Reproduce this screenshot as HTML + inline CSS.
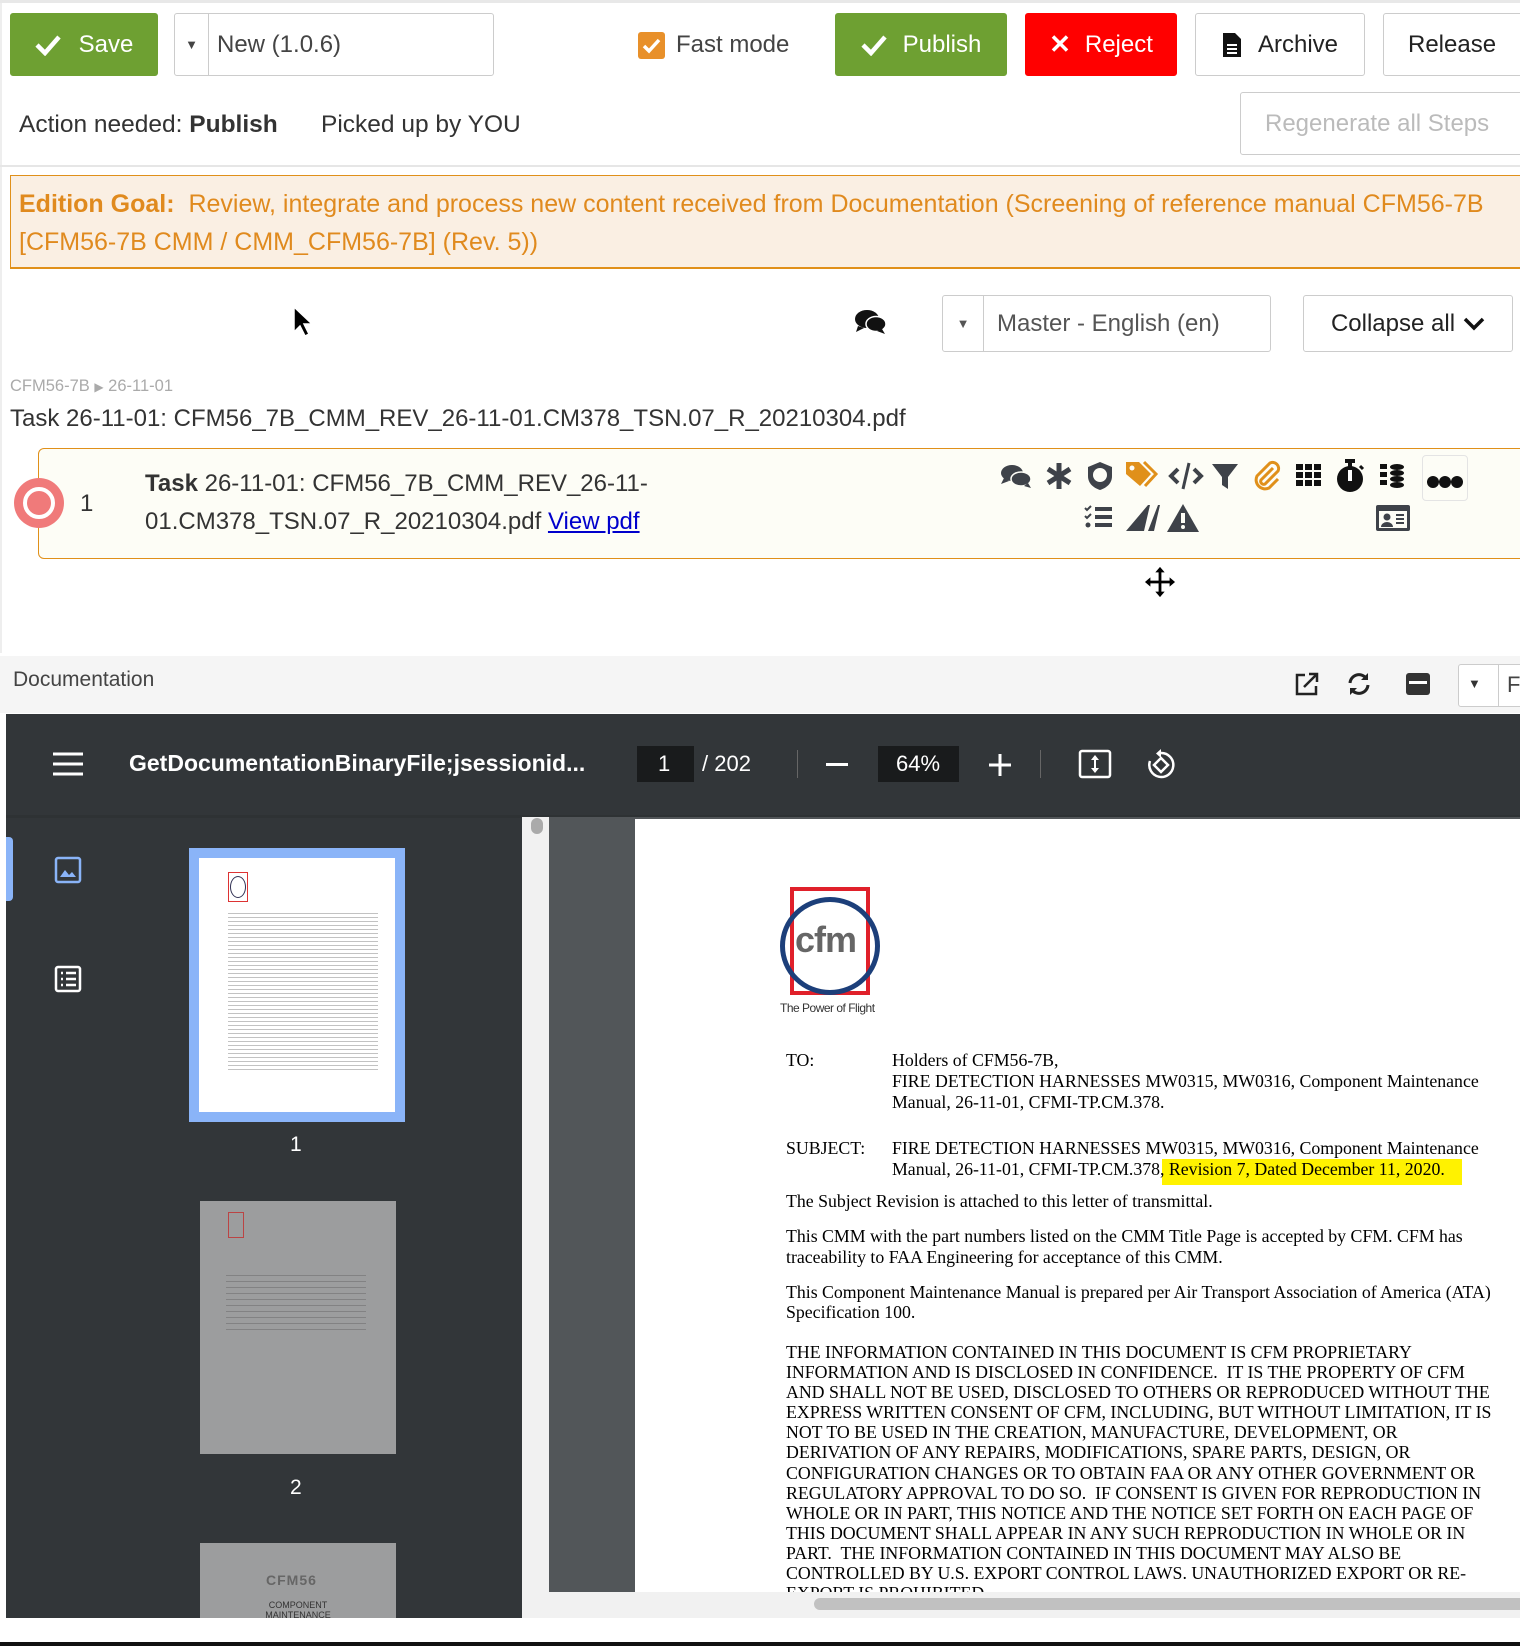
<!DOCTYPE html>
<html><head><meta charset="utf-8"><style>
*{box-sizing:border-box;margin:0;padding:0}
body{width:1520px;height:1646px;position:relative;overflow:hidden;background:#fff;font-family:"Liberation Sans",sans-serif;color:#333}
.a{position:absolute}
.btn{position:absolute;border:1px solid #ccc;border-radius:3px;background:#fff;font-size:24px;display:flex;align-items:center;justify-content:center;color:#222}
.g{background:#6ea032;border-color:#6ea032;color:#fff}
.ico{position:absolute;width:32px;height:32px}
.pl{position:absolute;left:0;white-space:nowrap;font-family:"Liberation Serif",serif;font-size:17.8px;color:#000}
.tt{color:#fff;font-size:23px}
</style></head><body>
<div class="a" style="left:0;top:0;width:1520px;height:3px;background:#e8e8e8"></div>
<div class="a" style="left:0;top:3px;width:2px;height:650px;background:#eee"></div>

<div class="btn g" style="left:10px;top:13px;width:148px;height:63px"><svg width="26" height="22" viewBox="0 0 26 22" style="margin-right:18px"><path d="M2 11l8 8L24 3" stroke="#fff" stroke-width="4.5" fill="none"/></svg>Save</div>
<div class="btn" style="left:174px;top:13px;width:320px;height:63px;justify-content:flex-start;color:#444"><div style="width:34px;height:100%;border-right:1px solid #ccc;display:flex;align-items:center;justify-content:center;font-size:13px">▼</div><span style="margin-left:8px">New (1.0.6)</span></div>
<div class="a" style="left:638px;top:32px;width:27px;height:27px;background:#e8902a;border-radius:3px"><svg width="27" height="27"><path d="M6 14l5 5 10-11" stroke="#fff" stroke-width="3.5" fill="none"/></svg></div>
<div class="a" style="left:676px;top:31px;font-size:24px;color:#444">Fast mode</div>
<div class="btn g" style="left:835px;top:13px;width:172px;height:63px"><svg width="26" height="22" viewBox="0 0 26 22" style="margin-right:16px"><path d="M2 11l8 8L24 3" stroke="#fff" stroke-width="4.5" fill="none"/></svg>Publish</div>
<div class="btn" style="left:1025px;top:13px;width:152px;height:63px;background:#f00;border-color:#f00;color:#fff"><span style="font-size:26px;font-weight:bold;margin-right:14px">✕</span>Reject</div>
<div class="btn" style="left:1195px;top:13px;width:170px;height:63px"><svg width="20" height="26" viewBox="0 0 20 26" style="margin-right:16px"><path d="M1 1h12l6 6v18H1z" fill="#111"/><path d="M5 13h10M5 17h10M5 21h10" stroke="#fff" stroke-width="2"/></svg>Archive</div>
<div class="btn" style="left:1383px;top:13px;width:150px;height:63px;justify-content:flex-start;padding-left:24px">Release</div>

<div class="a" style="left:19px;top:111px;font-size:24.5px;color:#333">Action needed: <b>Publish</b></div>
<div class="a" style="left:321px;top:111px;font-size:24.5px;color:#333">Picked up by YOU</div>
<div class="btn" style="left:1240px;top:92px;width:300px;height:63px;justify-content:flex-start;padding-left:24px;color:#bbb">Regenerate all Steps</div>
<div class="a" style="left:0;top:165px;width:1520px;height:2px;background:#e6e6e6"></div>

<div class="a" style="left:10px;top:175px;width:1530px;height:94px;background:#faefe3;border:1px solid #e0901a;border-bottom-width:2px"></div>
<div class="a" style="left:19px;top:186px;width:1500px;font-size:25px;line-height:37.5px;color:#e08a1e;white-space:nowrap"><b>Edition Goal:</b>&nbsp; Review, integrate and process new content received from Documentation (Screening of reference manual CFM56-7B<br>[CFM56-7B CMM / CMM_CFM56-7B] (Rev. 5))</div>

<svg class="a" style="left:292px;top:305px" width="22" height="34"><path d="M2 2v25l6-6 5 10 4-2-5-10h8z" fill="#000" stroke="#fff" stroke-width="1.5"/></svg>
<svg class="a" style="left:854px;top:308px" width="34" height="28" viewBox="0 0 34 28"><ellipse cx="13" cy="11" rx="12" ry="9" fill="#111"/><path d="M4 18l-2 6 8-4z" fill="#111"/><ellipse cx="22" cy="16" rx="10" ry="7.5" fill="#111" stroke="#fff" stroke-width="1.5"/><path d="M28 21l3 5-8-3z" fill="#111"/></svg>
<div class="btn" style="left:942px;top:295px;width:329px;height:57px;justify-content:flex-start;color:#555"><div style="width:41px;height:100%;border-right:1px solid #ccc;display:flex;align-items:center;justify-content:center;font-size:13px">▼</div><span style="margin-left:13px">Master - English (en)</span></div>
<div class="btn" style="left:1303px;top:295px;width:210px;height:57px">Collapse all<svg width="22" height="14" style="margin-left:8px"><path d="M2 2l9 9 9-9" stroke="#111" stroke-width="3.5" fill="none"/></svg></div>

<div class="a" style="left:10px;top:377px;font-size:16.5px;color:#aaa">CFM56-7B <span style="font-size:12px">▶</span> 26-11-01</div>
<div class="a" style="left:10px;top:405px;font-size:24px;color:#333">Task 26-11-01: CFM56_7B_CMM_REV_26-11-01.CM378_TSN.07_R_20210304.pdf</div>

<div class="a" style="left:38px;top:448px;width:1500px;height:111px;background:#fdfdf6;border:1.5px solid #e0901a;border-radius:6px 0 0 6px"></div>
<div class="a" style="left:14px;top:478px;width:50px;height:50px;border-radius:50%;background:#f07a7a"></div>
<div class="a" style="left:23px;top:487px;width:32px;height:32px;border-radius:50%;border:4px solid #fff;background:#f07a7a"></div>
<div class="a" style="left:80px;top:490px;font-size:24px">1</div>
<div class="a" style="left:145px;top:465px;font-size:24px;line-height:38px;color:#333"><b>Task</b> 26-11-01: CFM56_7B_CMM_REV_26-11-<br>01.CM378_TSN.07_R_20210304.pdf <span style="color:#00c;text-decoration:underline">View pdf</span></div>

<svg class="ico" style="left:1000px;top:460px" viewBox="0 0 32 32"><ellipse cx="12" cy="13" rx="11" ry="8" fill="#3e4249"/><path d="M4 18l-3 6 8-3z" fill="#3e4249"/><ellipse cx="21" cy="19" rx="10" ry="7" fill="#3e4249" stroke="#fdfdf6" stroke-width="1.5"/><path d="M28 23l3 5-7-2z" fill="#3e4249"/></svg>
<svg class="ico" style="left:1043px;top:460px" viewBox="0 0 32 32"><path d="M16 3v26M5 9l22 14M27 9L5 23" stroke="#3e4249" stroke-width="5"/></svg>
<svg class="ico" style="left:1084px;top:460px" viewBox="0 0 32 32"><path d="M16 2l12 5v9c0 8-6 12-12 14C10 28 4 24 4 16V7z" fill="#3e4249"/><circle cx="16" cy="15" r="7" fill="#fdfdf6"/></svg>
<svg class="ico" style="left:1124px;top:458px;width:38px" viewBox="0 0 38 32"><path d="M2 4h13l12 12-11 12L2 16z" fill="#e0901a"/><circle cx="8" cy="10" r="2.5" fill="#fdfdf6"/><path d="M20 4l12 12-11 12" stroke="#e0901a" stroke-width="3" fill="none"/></svg>
<svg class="ico" style="left:1168px;top:460px;width:36px" viewBox="0 0 36 32"><path d="M10 9l-7 7 7 7M26 9l7 7-7 7" stroke="#3e4249" stroke-width="4" fill="none"/><path d="M21 3l-6 26" stroke="#3e4249" stroke-width="3"/></svg>
<svg class="ico" style="left:1209px;top:460px" viewBox="0 0 32 32"><path d="M3 4h26L19 17v12l-6-4v-8z" fill="#3e4249"/></svg>
<svg class="ico" style="left:1251px;top:460px" viewBox="0 0 32 32"><path d="M22 8L10 20a3 3 0 0 0 4 4l13-13a6 6 0 0 0-8-8L6 16a9 9 0 0 0 12 12l9-9" stroke="#e0901a" stroke-width="3" fill="none"/></svg>
<svg class="ico" style="left:1293px;top:460px" viewBox="0 0 32 32"><g fill="#111"><rect x="3" y="4" width="7" height="6"/><rect x="12" y="4" width="7" height="6"/><rect x="21" y="4" width="7" height="6"/><rect x="3" y="12" width="7" height="6"/><rect x="12" y="12" width="7" height="6"/><rect x="21" y="12" width="7" height="6"/><rect x="3" y="20" width="7" height="6"/><rect x="12" y="20" width="7" height="6"/><rect x="21" y="20" width="7" height="6"/></g></svg>
<svg class="ico" style="left:1334px;top:458px;height:36px" viewBox="0 0 32 36"><rect x="11" y="1" width="10" height="4" fill="#111"/><rect x="14" y="4" width="4" height="5" fill="#111"/><circle cx="16" cy="21" r="13" fill="#111"/><rect x="14" y="12" width="4" height="11" fill="#fff"/><path d="M26 8l3 3" stroke="#111" stroke-width="3"/></svg>
<svg class="ico" style="left:1376px;top:460px" viewBox="0 0 32 32"><g fill="#111"><rect x="4" y="4" width="7" height="5"/><rect x="4" y="12" width="7" height="5"/><rect x="4" y="20" width="7" height="5"/><ellipse cx="21" cy="7" rx="7" ry="3"/><ellipse cx="21" cy="13" rx="7" ry="3"/><ellipse cx="21" cy="19" rx="7" ry="3"/><ellipse cx="21" cy="25" rx="7" ry="3"/></g></svg>
<div class="a" style="left:1422px;top:455px;width:46px;height:46px;border:1px solid #e4e4e4;border-radius:4px;background:#fdfdf6"></div>
<svg class="a" style="left:1425px;top:474px" width="40" height="16"><circle cx="8" cy="8" r="6" fill="#111"/><circle cx="20" cy="8" r="6" fill="#111"/><circle cx="32" cy="8" r="6" fill="#111"/></svg>
<svg class="ico" style="left:1083px;top:502px" viewBox="0 0 32 32"><path d="M2 6l2 2 4-4M2 14l2 2 4-4" stroke="#3e4249" stroke-width="2" fill="none"/><circle cx="5" cy="23" r="2.5" fill="#3e4249"/><path d="M12 7h17M12 15h17M12 23h17" stroke="#3e4249" stroke-width="4"/></svg>
<svg class="ico" style="left:1124px;top:502px;width:36px" viewBox="0 0 36 32"><path d="M2 29L24 3h2L20 29zM24 29L34 3h2l-6 26z" fill="#3e4249"/></svg>
<svg class="ico" style="left:1166px;top:502px;width:34px" viewBox="0 0 34 32"><path d="M17 2L33 30H1z" fill="#3e4249"/><rect x="15" y="11" width="4" height="10" fill="#fdfdf6"/><circle cx="17" cy="25" r="2" fill="#fdfdf6"/></svg>
<svg class="ico" style="left:1375px;top:502px;width:36px" viewBox="0 0 36 32"><rect x="1" y="3" width="34" height="26" rx="2" fill="#3e4249"/><rect x="4" y="9" width="28" height="17" fill="#fdfdf6"/><circle cx="12" cy="15" r="3.5" fill="#3e4249"/><path d="M6 25a6 5 0 0 1 12 0z" fill="#3e4249"/><path d="M21 13h8M21 17h8M21 21h8" stroke="#3e4249" stroke-width="2"/></svg>

<svg class="a" style="left:1143px;top:565px" width="34" height="34" viewBox="0 0 34 34"><path d="M17 1l6 7h-4v7h7v-4l7 6-7 6v-4h-7v7h4l-6 7-6-7h4v-7H8v4l-7-6 7-6v4h7V8h-4z" fill="#000" stroke="#fff" stroke-width="1.2"/></svg>

<div class="a" style="left:0;top:656px;width:1520px;height:57px;background:#f5f5f5"></div>
<div class="a" style="left:13px;top:668px;font-size:21px;color:#444">Documentation</div>
<svg class="a" style="left:1294px;top:671px" width="26" height="26" viewBox="0 0 26 26"><path d="M11 4H3v19h19v-8" stroke="#222" stroke-width="2.5" fill="none"/><path d="M10 16L23 3M15 3h8v8" stroke="#222" stroke-width="2.5" fill="none"/></svg>
<svg class="a" style="left:1346px;top:671px" width="26" height="26" viewBox="0 0 26 26"><path d="M4 12a9 9 0 0 1 16-5M22 14a9 9 0 0 1-16 5" stroke="#222" stroke-width="3" fill="none"/><path d="M22 2v7h-7zM4 24v-7h7z" fill="#222"/></svg>
<svg class="a" style="left:1405px;top:672px" width="26" height="24"><rect x="1" y="1" width="24" height="22" rx="3" fill="#333"/><rect x="4" y="9" width="18" height="3" fill="#fff"/></svg>
<div class="a" style="left:1458px;top:664px;width:70px;height:43px;border:1px solid #ccc;border-radius:3px;background:#fff"></div>
<div class="a" style="left:1468px;top:676px;font-size:13px;color:#333">▼</div>
<div class="a" style="left:1498px;top:664px;width:1px;height:43px;background:#ccc"></div>
<div class="a" style="left:1507px;top:672px;font-size:22px;color:#444">F</div>

<div class="a" style="left:0;top:713px;width:1520px;height:2px;background:#fff"></div>
<div class="a" style="left:6px;top:714px;width:1514px;height:904px;background:#323639"></div>
<svg class="a" style="left:53px;top:752px" width="30" height="24"><path d="M0 2h30M0 12h30M0 22h30" stroke="#fff" stroke-width="3"/></svg>
<div class="a tt" style="left:129px;top:750px;font-weight:bold">GetDocumentationBinaryFile;jsessionid...</div>
<div class="a" style="left:637px;top:746px;width:57px;height:36px;background:#191b1c"></div>
<div class="a tt" style="left:658px;top:751px;font-size:22px">1</div>
<div class="a tt" style="left:702px;top:751px;font-size:22px">/ 202</div>
<div class="a" style="left:797px;top:750px;width:1px;height:28px;background:#666"></div>
<div class="a" style="left:826px;top:763px;width:22px;height:3px;background:#fff"></div>
<div class="a" style="left:878px;top:746px;width:81px;height:36px;background:#191b1c"></div>
<div class="a tt" style="left:896px;top:751px;font-size:22px">64%</div>
<svg class="a" style="left:988px;top:753px" width="24" height="24"><path d="M12 1v22M1 12h22" stroke="#fff" stroke-width="3"/></svg>
<div class="a" style="left:1040px;top:750px;width:1px;height:28px;background:#666"></div>
<svg class="a" style="left:1078px;top:749px" width="34" height="30"><rect x="2" y="2" width="30" height="26" rx="2" stroke="#fff" stroke-width="2.5" fill="none"/><path d="M17 6l-4 5h8zM17 24l-4-5h8z" fill="#fff"/><path d="M17 10v10" stroke="#fff" stroke-width="2"/></svg>
<svg class="a" style="left:1145px;top:748px" width="32" height="32"><path d="M16 5a12 12 0 1 1-11 8" stroke="#fff" stroke-width="2.5" fill="none"/><path d="M16 1v9l-5-4.5z" fill="#fff"/><path d="M9 17l7-7 7 7-7 7z" stroke="#fff" stroke-width="2.5" fill="none"/></svg>
<div class="a" style="left:6px;top:815px;width:1514px;height:3px;background:#2a2d30;opacity:.5"></div>

<div class="a" style="left:6px;top:837px;width:7px;height:64px;background:#8ab4f8;border-radius:0 4px 4px 0"></div>
<svg class="a" style="left:54px;top:856px" width="28" height="28"><rect x="2" y="2" width="24" height="24" rx="2" stroke="#8ab4f8" stroke-width="2.5" fill="none"/><path d="M6 21l5-7 4 5 3-3 4 5z" fill="#8ab4f8"/></svg>
<svg class="a" style="left:54px;top:965px" width="28" height="28"><rect x="2" y="2" width="24" height="24" rx="2" stroke="#fff" stroke-width="2.5" fill="none"/><path d="M7 8h2M12 8h10M7 14h2M12 14h10M7 20h2M12 20h10" stroke="#fff" stroke-width="2.5"/></svg>
<div class="a" style="left:189px;top:848px;width:216px;height:274px;background:#8ab4f8"></div>
<div class="a" style="left:199px;top:858px;width:196px;height:254px;background:#fff"></div>
<div class="a" style="left:228px;top:872px;width:20px;height:30px;border:1.5px solid #d33;"></div>
<div class="a" style="left:230px;top:876px;width:16px;height:22px;border:1.5px solid #335;border-radius:50%"></div>
<div class="a" style="left:228px;top:910px;width:150px;height:160px;background:repeating-linear-gradient(#fff 0 3px,#999 3px 4px);opacity:.6"></div>
<div class="a tt" style="left:290px;top:1133px;font-size:21px">1</div>
<div class="a" style="left:200px;top:1201px;width:196px;height:253px;background:#9c9d9e"></div>
<div class="a" style="left:228px;top:1212px;width:16px;height:26px;border:1px solid #b44"></div>
<div class="a" style="left:226px;top:1270px;width:140px;height:60px;background:repeating-linear-gradient(#9c9d9e 0 5px,#777 5px 6px);opacity:.7"></div>
<div class="a tt" style="left:290px;top:1476px;font-size:21px">2</div>
<div class="a" style="left:200px;top:1543px;width:196px;height:75px;background:#9c9d9e"></div>
<div class="a" style="left:266px;top:1572px;font-size:14px;font-weight:bold;color:#666;letter-spacing:1px">CFM56</div>
<div class="a" style="left:250px;top:1600px;font-size:9px;color:#333;text-align:center;width:96px">COMPONENT<br>MAINTENANCE MANUAL</div>

<div class="a" style="left:522px;top:817px;width:27px;height:801px;background:#f1f1f1"></div>
<div class="a" style="left:531px;top:818px;width:12px;height:16px;background:#aaa;border-radius:6px"></div>
<div class="a" style="left:549px;top:817px;width:971px;height:775px;background:#525659"></div>
<div class="a" style="left:635px;top:819px;width:885px;height:773px;background:#fff;overflow:hidden">
  <div class="a" style="left:155px;top:68px;width:80px;height:108px;border:4px solid #e0202a"></div>
  <div class="a" style="left:145px;top:78px;width:100px;height:98px;border:5px solid #1c3f7a;border-radius:50%"></div>
  <div class="a" style="left:160px;top:100px;font-size:36px;font-weight:bold;color:#666;letter-spacing:-1px">cfm</div>
  <div class="a" style="left:145px;top:182px;font-size:12px;color:#333;letter-spacing:-0.5px">The Power of Flight</div>
  <div class="a" style="left:527px;top:340px;width:300px;height:26px;background:#fff200"></div>
  <div class="a" style="left:151px;top:231px">
    <div class="pl" style="top:0">TO:</div>
    <div class="pl" style="left:106px;top:0">Holders of CFM56-7B,</div>
    <div class="pl" style="left:106px;top:21px">FIRE DETECTION HARNESSES MW0315, MW0316, Component Maintenance</div>
    <div class="pl" style="left:106px;top:42px">Manual, 26-11-01, CFMI-TP.CM.378.</div>
    <div class="pl" style="top:88px">SUBJECT:</div>
    <div class="pl" style="left:106px;top:88px">FIRE DETECTION HARNESSES MW0315, MW0316, Component Maintenance</div>
    <div class="pl" style="left:106px;top:109px">Manual, 26-11-01, CFMI-TP.CM.378, Revision 7, Dated December 11, 2020.</div>
    <div class="pl" style="top:141px">The Subject Revision is attached to this letter of transmittal.</div>
    <div class="pl" style="top:176px">This CMM with the part numbers listed on the CMM Title Page is accepted by CFM. CFM has</div>
    <div class="pl" style="top:197px">traceability to FAA Engineering for acceptance of this CMM.</div>
    <div class="pl" style="top:232px">This Component Maintenance Manual is prepared per Air Transport Association of America (ATA)</div>
    <div class="pl" style="top:252px">Specification 100.</div>
    <div class="pl" style="top:292px;line-height:20.1px">THE INFORMATION CONTAINED IN THIS DOCUMENT IS CFM PROPRIETARY<br>INFORMATION AND IS DISCLOSED IN CONFIDENCE.&nbsp; IT IS THE PROPERTY OF CFM<br>AND SHALL NOT BE USED, DISCLOSED TO OTHERS OR REPRODUCED WITHOUT THE<br>EXPRESS WRITTEN CONSENT OF CFM, INCLUDING, BUT WITHOUT LIMITATION, IT IS<br>NOT TO BE USED IN THE CREATION, MANUFACTURE, DEVELOPMENT, OR<br>DERIVATION OF ANY REPAIRS, MODIFICATIONS, SPARE PARTS, DESIGN, OR<br>CONFIGURATION CHANGES OR TO OBTAIN FAA OR ANY OTHER GOVERNMENT OR<br>REGULATORY APPROVAL TO DO SO.&nbsp; IF CONSENT IS GIVEN FOR REPRODUCTION IN<br>WHOLE OR IN PART, THIS NOTICE AND THE NOTICE SET FORTH ON EACH PAGE OF<br>THIS DOCUMENT SHALL APPEAR IN ANY SUCH REPRODUCTION IN WHOLE OR IN<br>PART.&nbsp; THE INFORMATION CONTAINED IN THIS DOCUMENT MAY ALSO BE<br>CONTROLLED BY U.S. EXPORT CONTROL LAWS. UNAUTHORIZED EXPORT OR RE-<br>EXPORT IS PROHIBITED.</div>
  </div>
</div>
<div class="a" style="left:549px;top:1592px;width:971px;height:26px;background:#f1f1f1"></div>
<div class="a" style="left:814px;top:1598px;width:720px;height:12px;background:#c1c1c1;border-radius:6px"></div>
<div class="a" style="left:0;top:1618px;width:1520px;height:24px;background:#fff"></div>
<div class="a" style="left:0;top:1642px;width:1520px;height:4px;background:#111"></div>
</body></html>
